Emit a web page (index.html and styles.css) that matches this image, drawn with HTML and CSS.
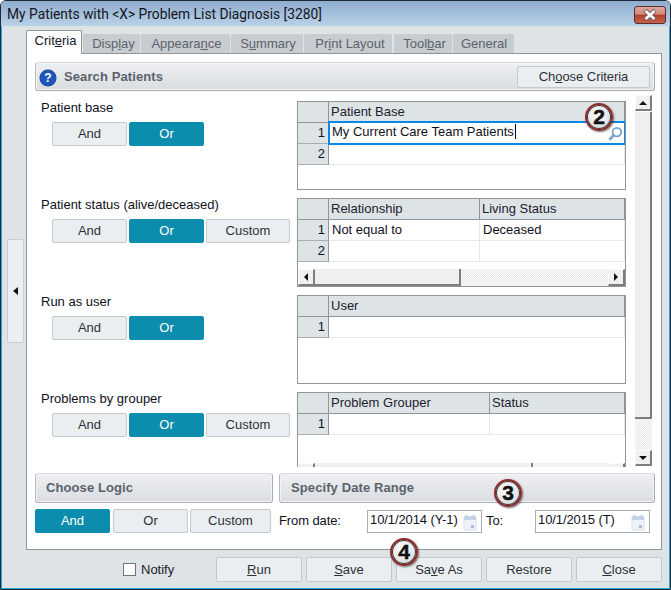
FILE: index.html
```html
<!DOCTYPE html>
<html lang="en">
<head>
<meta charset="utf-8">
<title>My Patients with &lt;X&gt; Problem List Diagnosis [3280]</title>
<link rel="stylesheet" href="styles.css">
</head>
<body>
<div class="window">
  <div class="window-inner">
    <header class="titlebar">
      <span class="title">My Patients with &lt;X&gt; Problem List Diagnosis [3280]</span>
      <button class="close-x" aria-label="Close">
        <svg width="18" height="12" viewBox="0 0 18 12"><path d="M4 1.5 L14 10.5 M14 1.5 L4 10.5" stroke="#6b5a58" stroke-width="4.4" fill="none"/><path d="M4.5 2 L13.5 10 M13.5 2 L4.5 10" stroke="#fff" stroke-width="2.8" fill="none"/></svg>
      </button>
    </header>
    <div class="client">
      <div class="gutter">
        <div class="collapse"><span class="arrow arrow-left"></span></div>
      </div>
      <div class="workspace">
        <nav class="tabs">
          <div class="tab active tab-criteria">Crit<u>e</u>ria</div>
          <div class="tab tab-display">Disp<u>l</u>ay</div>
          <div class="tab tab-appearance">Appeara<u>n</u>ce</div>
          <div class="tab tab-summary">S<u>u</u>mmary</div>
          <div class="tab tab-print">Pr<u>i</u>nt Layout</div>
          <div class="tab tab-toolbar">Tool<u>b</u>ar</div>
          <div class="tab tab-general">General</div>
        </nav>
        <main class="panel">
          <div class="section-head search-head">
            <span class="help">?</span>
            <span class="section-title">Search Patients</span>
            <button class="btn choose-btn">Ch<u>o</u>ose Criteria</button>
          </div>
          <div class="criteria-area">
            <div class="rows">
              <section class="row">
                <div class="criterion">
                  <div class="crit-label">Patient base</div>
                  <div class="toggle">
                    <button class="btn seg">And</button>
                    <button class="btn seg on">Or</button>
                  </div>
                </div>
                <div class="grid grid-one">
                  <div class="corner"></div><div class="hd">Patient Base</div>
                  <div class="num">1</div><div class="cell selected">My Current Care Team Patients<span class="caret"></span>
                    <svg class="lens" width="16" height="16" viewBox="0 0 17 17"><circle cx="10.5" cy="6.5" r="4.6" fill="none" stroke="#6f9fd0" stroke-width="1.8"/><path d="M7 10 L2.5 14.5" stroke="#7ba7d6" stroke-width="3"/></svg>
                  </div>
                  <div class="num">2</div><div class="cell"></div>
                </div>
              </section>
              <section class="row">
                <div class="criterion">
                  <div class="crit-label">Patient status (alive/deceased)</div>
                  <div class="toggle">
                    <button class="btn seg">And</button>
                    <button class="btn seg on">Or</button>
                    <button class="btn seg seg-custom">Custom</button>
                  </div>
                </div>
                <div class="grid grid-two">
                  <div class="corner"></div><div class="hd">Relationship</div><div class="hd">Living Status</div>
                  <div class="num">1</div><div class="cell">Not equal to</div><div class="cell">Deceased</div>
                  <div class="num">2</div><div class="cell"></div><div class="cell"></div>
                  <div class="hscroll">
                    <div class="sb-btn"><span class="arrow arrow-left-s"></span></div>
                    <div class="sb-thumb thumb-a"></div>
                    <div class="sb-track"></div>
                    <div class="sb-btn"><span class="arrow arrow-right-s"></span></div>
                  </div>
                </div>
              </section>
              <section class="row">
                <div class="criterion">
                  <div class="crit-label">Run as user</div>
                  <div class="toggle">
                    <button class="btn seg">And</button>
                    <button class="btn seg on">Or</button>
                  </div>
                </div>
                <div class="grid grid-one">
                  <div class="corner"></div><div class="hd">User</div>
                  <div class="num">1</div><div class="cell"></div>
                </div>
              </section>
              <section class="row">
                <div class="criterion">
                  <div class="crit-label">Problems by grouper</div>
                  <div class="toggle">
                    <button class="btn seg">And</button>
                    <button class="btn seg on">Or</button>
                    <button class="btn seg seg-custom">Custom</button>
                  </div>
                </div>
                <div class="grid grid-four">
                  <div class="corner"></div><div class="hd">Problem Grouper</div><div class="hd">Status</div>
                  <div class="num">1</div><div class="cell"></div><div class="cell"></div>
                  <div class="hscroll">
                    <div class="sb-btn"></div>
                    <div class="sb-thumb thumb-b"></div>
                    <div class="sb-track"></div>
                    <div class="sb-btn"></div>
                  </div>
                </div>
              </section>
            </div>
            <div class="vscroll">
              <div class="sb-btn v"><span class="arrow arrow-up"></span></div>
              <div class="sb-thumb thumb-v"></div>
              <div class="sb-track"></div>
              <div class="sb-btn v"><span class="arrow arrow-down"></span></div>
            </div>
          </div>
          <div class="lower">
            <div class="logic">
              <div class="section-head">
                <span class="section-title">Choose Logic</span>
              </div>
              <div class="logic-toggle">
                <button class="btn seg on">And</button>
                <button class="btn seg">Or</button>
                <button class="btn seg seg-custom2">Custom</button>
              </div>
            </div>
            <div class="dates">
              <div class="section-head date-head">
                <span class="section-title">Specify Date Range</span>
              </div>
              <div class="date-row">
                <span class="from-label">From date:</span>
                <div class="date-input">10/1/2014 (Y-1)
                  <svg class="cal" width="14" height="17" viewBox="0 0 14 17"><path d="M1 3h12v13H1z" fill="#eef2f8" stroke="#d5deea"/><path d="M1 2h12v4H1z" fill="#c3d2e6"/><path d="M3.5 0.5v3M10.5 0.5v3" stroke="#c3d2e6" stroke-width="1.5"/><rect x="8" y="11" width="3" height="3" fill="#a9bdd8"/></svg>
                </div>
                <span class="to-label">To:</span>
                <div class="date-input">10/1/2015 (T)
                  <svg class="cal" width="14" height="17" viewBox="0 0 14 17"><path d="M1 3h12v13H1z" fill="#eef2f8" stroke="#d5deea"/><path d="M1 2h12v4H1z" fill="#c3d2e6"/><path d="M3.5 0.5v3M10.5 0.5v3" stroke="#c3d2e6" stroke-width="1.5"/><rect x="8" y="11" width="3" height="3" fill="#a9bdd8"/></svg>
                </div>
              </div>
            </div>
          </div>
        </main>
        <footer class="footer">
          <label class="notify"><span class="check"></span>Notify</label>
          <button class="btn action"><u>R</u>un</button>
          <button class="btn action"><u>S</u>ave</button>
          <button class="btn action">Sa<u>v</u>e As</button>
          <button class="btn action">Restore</button>
          <button class="btn action"><u>C</u>lose</button>
        </footer>
      </div>
    </div>
  </div>
  <span class="badge badge-2">2</span>
  <span class="badge badge-3">3</span>
  <span class="badge badge-4">4</span>
</div>
</body>
</html>
```
FILE: styles.css
```css
* { box-sizing: border-box; }
html, body { margin: 0; padding: 0; background: #fff; }
body { font-family: "Liberation Sans", Arial, sans-serif; font-size: 13px; color: #10101c; }
button { font: inherit; margin: 0; padding: 0; }
u { text-underline-offset: 1px; }

.window { position: relative; width: 671px; height: 590px; border: 1px solid #1d2a36; border-radius: 6px 6px 0 0; overflow: hidden; }
.window-inner { display: flex; flex-direction: column; height: 100%; border: 1px solid #2aa7df; border-top: 0; border-radius: 5px 5px 0 0; background: #dee3e6; }

.titlebar { flex: 0 0 25px; display: flex; align-items: center; justify-content: space-between; margin: 0 -1px; padding: 0 4px 0 6px; background: linear-gradient(#8fadcd, #b9d1e8); }
.title { font-family: Roboto, "Liberation Sans", sans-serif; font-size: 13.8px; color: #14141e; }
.close-x { width: 32px; height: 18px; display: flex; align-items: center; justify-content: center; border: 1px solid #5b2c2c; border-radius: 3px; background: linear-gradient(#dca79c 0, #d08a7c 45%, #b5402c 50%, #c4614e 100%); position: relative; top: 1px; }

.client { flex: 1; display: flex; min-height: 0; }
.gutter { flex: 0 0 24px; }
.collapse { width: 17px; height: 104px; margin: 213px 0 0 5px; display: flex; align-items: center; justify-content: center; background: #eceff2; border: 1px solid #c9ced2; border-radius: 2px; }

.workspace { flex: 0 0 636px; display: flex; flex-direction: column; }

.tabs { flex: 0 0 26px; display: flex; align-items: flex-end; gap: 1px; padding-top: 3px; }
.tab { height: 20px; padding-left: 2px; background: #c7ccd1; color: #5d636b; font-size: 13px; text-align: center; line-height: 20px; border-radius: 2px 2px 0 0; border-top: 1px solid #dfe3e6; }
.tab.active { height: 24px; background: #fff; color: #15152a; border: 1px solid #8f9599; border-bottom: 0; position: relative; top: 1px; z-index: 2; line-height: 19px; }
.tab-criteria { width: 56px; padding-left: 3px; }
.tab-display { width: 57px; padding-left: 4px; }
.tab-appearance { width: 89px; }
.tab-summary { width: 72px; }
.tab-print { width: 88px; padding-left: 4px; }
.tab-toolbar { width: 58px; margin-left: 1px; padding-left: 3px; }
.tab-general { width: 61px; padding-left: 1px; }

.panel { flex: 0 0 497px; background: #fff; border: 1px solid #8f9599; padding: 8px 6px 0 8px; }

.section-head { display: flex; align-items: center; height: 30px; border: 1px solid #a7acb0; border-top-color: #d9dcdf; border-left-color: #b5babd; border-radius: 3px; background: linear-gradient(#eef0f2, #d9dde1); box-shadow: inset 0 0 0 1px #f3f4f6; padding: 0 0 1px 10px; }
.section-title { font-weight: bold; font-size: 13px; color: #5a636c; letter-spacing: .1px; }
.search-head { padding: 0 0 0 3px; height: 29px; }
.date-head { padding-left: 11px; }
.help { width: 16px; height: 16px; margin: 2px 8px 0 1px; border-radius: 50%; background: #1d55b8; color: #fff; font-weight: bold; font-size: 12px; line-height: 16px; text-align: center; box-shadow: 0 0 0 .5px #173f8a; }
.choose-btn { margin-left: auto; margin-right: 4px; width: 133px; height: 22px; letter-spacing: -.05px; }

.btn { background: #ebeef1; border: 1px solid #c4c9cc; border-radius: 2px; color: #2c3136; font-size: 13px; text-align: center; }

.criteria-area { height: 376px; display: flex; overflow: hidden; align-items: flex-start; }
.rows { flex: 0 0 591px; display: flex; flex-direction: column; gap: 8px; padding-top: 10px; }
.row { flex: 0 0 89px; display: flex; }
.criterion { flex: 0 0 262px; padding: 0 0 0 6px; }
.crit-label { height: 21px; line-height: 14px; }
.toggle { display: flex; gap: 2px; margin-left: 11px; }
.seg { width: 75px; height: 24px; padding-bottom: 2px; }
.seg.on { background: #0d8dae; border-color: #0d8dae; color: #fff; }
.seg-custom { width: 84px; }
.seg-custom2 { width: 81px; }

.grid { flex: 0 0 329px; height: 89px; border: 1px solid #8f9599; display: grid; grid-auto-rows: 21px; position: relative; align-content: start; overflow: hidden; }
.grid-one { grid-template-columns: 31px 1fr; }
.grid-two { grid-template-columns: 31px 151px 1fr; }
.grid-four { grid-template-columns: 31px 161px 1fr; }
.corner, .hd { background: #dee3e6; border-bottom: 1px solid #8f9599; border-right: 1px solid #8f9599; }
.hd { padding-left: 2px; line-height: 20px; color: #1c1c2c; }
.hd:last-of-type { border-right: 0; }
.num { background: #dee3e6; border-right: 1px solid #8f9599; border-bottom: 1px solid #a9aeb1; text-align: right; padding-right: 3px; line-height: 20px; }
.cell { border-right: 1px solid #e6e8ea; border-bottom: 1px solid #e6e8ea; padding-left: 3px; line-height: 20px; position: relative; }
.cell.selected { border: 2px solid #0a86e6; margin: -2px -1px 0 -1px; padding-left: 2px; line-height: 18px; z-index: 1; height: 24px; }
.caret { display: inline-block; width: 1px; height: 15px; background: #000; vertical-align: -3px; margin-left: 1px; }
.lens { position: absolute; right: 1px; top: 3px; }

.hscroll { position: absolute; left: 0; right: 0; top: 67px; height: 20px; display: flex; border-top: 3px solid #fff; }
.sb-btn { flex: 0 0 17px; height: 17px; background: #f0f0f0; border-right: 2px solid #7d7d7d; border-bottom: 2px solid #7d7d7d; border-top: 1px solid #fbfbfb; border-left: 1px solid #fbfbfb; display: flex; align-items: center; justify-content: center; }
.sb-thumb { background: #efefef; border-right: 2px solid #7d7d7d; border-bottom: 2px solid #7d7d7d; }
.thumb-a { flex: 0 0 146px; }
.thumb-b { flex: 0 0 218px; }
.sb-track { flex: 1; background-color: #f4f4f4; background-image: repeating-conic-gradient(#e9e9e9 0 25%, #fbfbfb 0 50%); background-size: 2px 2px; }

.vscroll { flex: 0 0 17px; height: 371px; margin: 4px 0 0 9px; display: flex; flex-direction: column; }
.sb-btn.v { flex: 0 0 16px; height: 16px; }
.thumb-v { flex: 0 0 307px; margin-top: 1px; }

.arrow { display: block; width: 0; height: 0; }
.arrow-left { border: 4px solid transparent; border-right: 5px solid #111; border-left: 0; }
.arrow-left-s { border: 4px solid transparent; border-right: 4px solid #111; border-left: 0; }
.arrow-right-s { border: 4px solid transparent; border-left: 4px solid #111; border-right: 0; }
.arrow-up { border: 4px solid transparent; border-bottom: 4px solid #111; border-top: 0; }
.arrow-down { border: 4px solid transparent; border-top: 4px solid #111; border-bottom: 0; }

.lower { display: flex; gap: 6px; margin-top: 6px; }
.logic { flex: 0 0 238px; }
.dates { flex: 0 0 376px; }
.logic-toggle { display: flex; gap: 3px; margin-top: 6px; }
.logic-toggle .seg-custom2 { margin-left: -1px; }
.date-row { display: flex; align-items: center; margin-top: 7px; height: 23px; letter-spacing: -.1px; }
.from-label { flex: 0 0 88px; padding-bottom: 2px; }
.date-input { flex: 0 0 115px; height: 23px; border: 1px solid #a9aeb1; padding-left: 2px; line-height: 18px; position: relative; }
.to-label { flex: 0 0 53px; padding: 0 0 2px 4px; }
.cal { position: absolute; right: 4px; top: 3px; }

.footer { flex: 1; display: flex; align-items: flex-start; gap: 4px; padding-top: 7px; }
.notify { flex: 0 0 186px; padding-left: 97px; display: flex; align-items: center; height: 25px; color: #1b1b2b; }
.check { width: 13px; height: 13px; border: 1px solid #6f7478; background: #fff; margin-right: 5px; }
.action { width: 86px; height: 25px; padding-bottom: 1px; }

.badge { position: absolute; width: 28px; height: 28px; border-radius: 50%; background: radial-gradient(circle at 45% 40%, #fff 0, #e6e6e6 55%, #bdbdbd 100%); border: 2px solid #8f2a2c; box-shadow: 1px 1px 2px rgba(0,0,0,.55), inset 0 0 0 1px #3a3a3a; font-weight: bold; font-size: 21px; line-height: 24px; text-align: center; color: #111; -webkit-text-stroke: .5px #111; z-index: 5; }
.badge-2 { left: 584px; top: 102px; }
.badge-3 { left: 493px; top: 478px; }
.badge-4 { left: 389px; top: 537px; }
```
